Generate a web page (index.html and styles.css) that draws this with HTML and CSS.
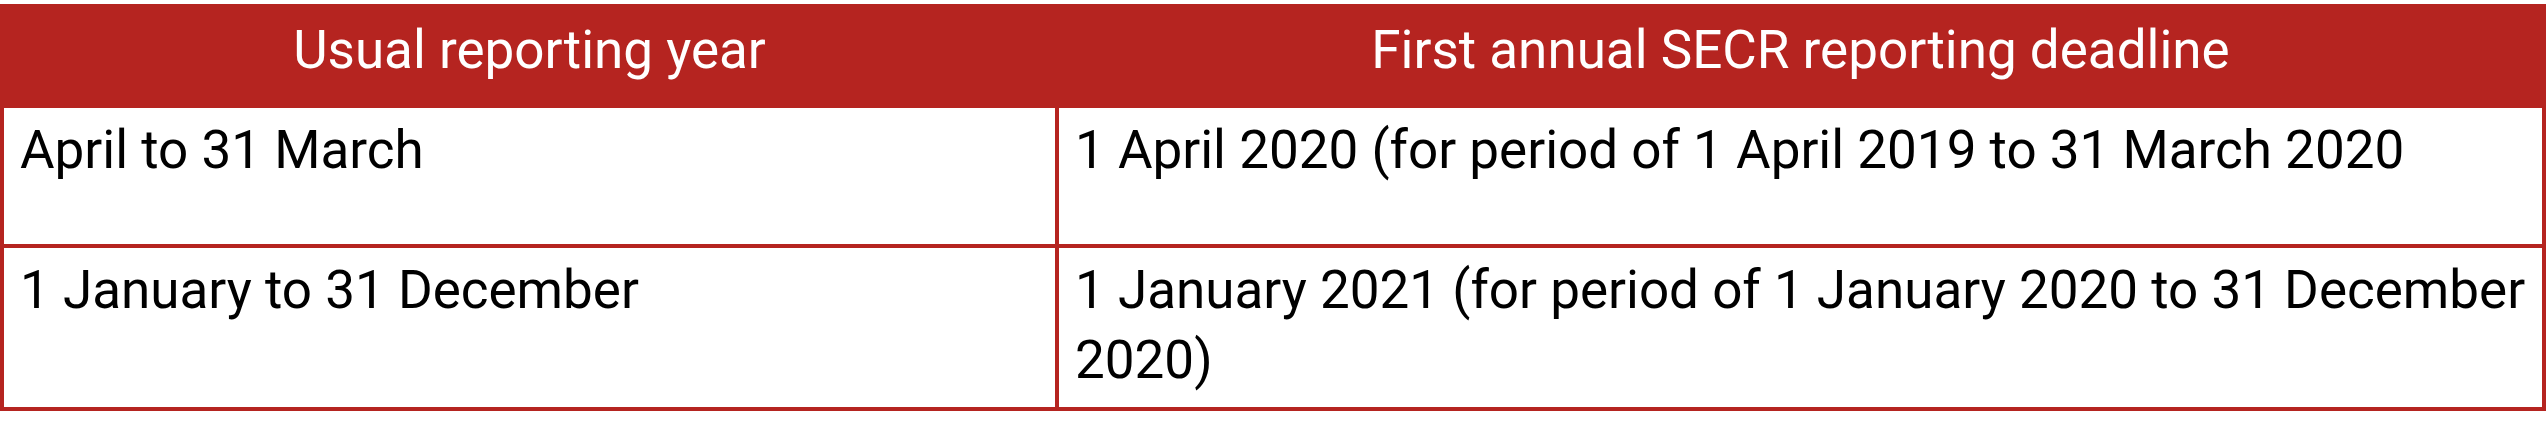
FILE: index.html
```html
<!DOCTYPE html>
<html lang="en">
<head>
<meta charset="utf-8">
<title>SECR reporting deadlines</title>
<link rel="stylesheet" href="styles.css">
</head>
<body>
<table class="secr-table">
  <thead>
    <tr class="head-row">
      <th class="cell head-cell col-first">Usual reporting year</th>
      <th class="cell head-cell col-second">First annual SECR reporting deadline</th>
    </tr>
  </thead>
  <tbody>
    <tr class="body-row row-short">
      <td class="cell body-cell col-first">April to 31 March</td>
      <td class="cell body-cell col-second">1 April 2020 (for period of 1 April 2019 to 31 March 2020</td>
    </tr>
    <tr class="body-row">
      <td class="cell body-cell col-first">1 January to 31 December</td>
      <td class="cell body-cell col-second">1 January 2021 (for period of 1 January 2020 to 31 December 2020)</td>
    </tr>
  </tbody>
</table>
</body>
</html>
```

FILE: styles.css
```css
html, body {
  margin: 0;
  padding: 0;
  background: #ffffff;
}

body {
  padding-top: 4px;
  font-family: Roboto, "Open Sans", "Liberation Sans", sans-serif;
}

.secr-table {
  width: 2546px;
  border-collapse: separate;
  border-spacing: 0;
  table-layout: fixed;
}

.cell {
  text-align: left;
  vertical-align: top;
  padding: 0;
}

.col-first {
  width: 1059px;
  border-left: 4px solid #b52420;
  border-right: 4px solid #b52420;
}

.col-second {
  border-right: 4px solid #b52420;
}

.head-cell {
  background: #b52420;
  color: #ffffff;
  font-weight: 400;
  font-size: 53px;
  line-height: 70px;
  height: 104px;
  box-sizing: border-box;
  padding-top: 11px;
  text-align: center;
}

.body-cell {
  color: #000000;
  font-size: 53px;
  line-height: 70px;
  padding: 7px 8px 12px 16px;
  border-bottom: 4px solid #b52420;
}

.row-short .body-cell {
  height: 140px;
  box-sizing: border-box;
}
```
